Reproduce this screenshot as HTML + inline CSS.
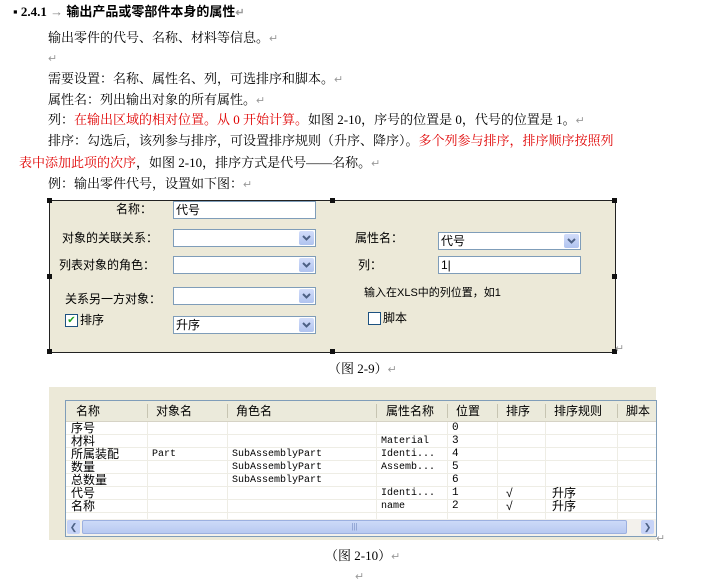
<!DOCTYPE html>
<html><head><meta charset="utf-8"><style>
body{margin:0;width:703px;height:583px;background:#fff;position:relative;overflow:hidden;font-family:"Liberation Serif","Noto Serif CJK SC","Noto Sans CJK SC",serif;font-size:13px;color:#000}
.a{position:absolute;white-space:nowrap;line-height:15px}
.r{color:#e00000}
.m{color:#999;font-size:11px}
.dlg{position:absolute;left:49px;top:200px;width:565px;height:151px;background:#ece9d8;border:1px solid #222}
.h{position:absolute;width:5px;height:5px;background:#111}
.s{font-family:"Liberation Sans","Noto Sans CJK SC",sans-serif;font-size:12px}
.tb{position:absolute;background:#fff;border:1px solid #7f9db9;height:18px;box-sizing:border-box;font-size:12px;line-height:16px;padding-left:2px}
.dd{position:absolute;right:1px;top:1px;width:15px;height:14px;background:linear-gradient(#d2ddfa,#b0c3ef);border-radius:2px}
.dd svg{position:absolute;left:3px;top:3px}
.cb{position:absolute;width:11px;height:11px;border:1px solid #1c5180;background:#fff;font-size:10px;line-height:11px;color:#21a121;text-align:center}
.tbl{position:absolute;left:49px;top:387px;width:607px;height:153px;background:#ece9d8}
.lst{position:absolute;left:16px;top:13px;width:590px;height:135px;background:#fff;border:1px solid #7f9db9;overflow:hidden}
.c{position:absolute;font-size:12px;line-height:13px;white-space:nowrap}
.mono{font-family:"Liberation Mono",monospace;font-size:10px}
</style></head><body>
<div class="a" style="left:13px;top:4px;font-weight:bold;font-family:'Liberation Serif','Noto Sans CJK SC',serif">▪ 2.4.1 <span style="color:#888;font-weight:normal">→</span> 输出产品或零部件本身的属性<span class="m">↵</span></div>
<div class="a" style="left:48px;top:30px">输出零件的代号、名称、材料等信息。<span class="m">↵</span></div>
<div class="a m" style="left:48px;top:52px">↵</div>
<div class="a" style="left:48px;top:71px">需要设置：名称、属性名、列，可选排序和脚本。<span class="m">↵</span></div>
<div class="a" style="left:48px;top:92px">属性名：列出输出对象的所有属性。<span class="m">↵</span></div>
<div class="a" style="left:48px;top:112px">列：<span class="r">在输出区域的相对位置。从 0 开始计算。</span>如图 2-10，序号的位置是 0，代号的位置是 1。<span class="m">↵</span></div>
<div class="a" style="left:48px;top:133px">排序：勾选后，该列参与排序，可设置排序规则（升序、降序）。<span class="r">多个列参与排序，排序顺序按照列</span></div>
<div class="a" style="left:19px;top:155px"><span class="r">表中添加此项的次序</span>，如图 2-10，排序方式是代号——名称。<span class="m">↵</span></div>
<div class="a" style="left:48px;top:176px">例：输出零件代号，设置如下图：<span class="m">↵</span></div>

<div class="dlg s">
<div class="h" style="left:-3px;top:-3px"></div><div class="h" style="left:280px;top:-3px"></div><div class="h" style="left:562px;top:-3px"></div>
<div class="h" style="left:-3px;top:73px"></div><div class="h" style="left:562px;top:73px"></div>
<div class="h" style="left:-3px;top:148px"></div><div class="h" style="left:280px;top:148px"></div><div class="h" style="left:562px;top:148px"></div>
<div class="a" style="left:66px;top:1px">名称：</div>
<div class="tb" style="left:123px;top:0px;width:143px">代号</div>
<div class="a" style="left:12px;top:30px">对象的关联关系：</div>
<div class="tb" style="left:123px;top:28px;width:143px"><div class="dd"><svg width="9" height="8"><path d="M1 2 L4.5 5.5 L8 2" fill="none" stroke="#4d6185" stroke-width="2"/></svg></div></div>
<div class="a" style="left:9px;top:57px">列表对象的角色：</div>
<div class="tb" style="left:123px;top:55px;width:143px"><div class="dd"><svg width="9" height="8"><path d="M1 2 L4.5 5.5 L8 2" fill="none" stroke="#4d6185" stroke-width="2"/></svg></div></div>
<div class="a" style="left:15px;top:91px">关系另一方对象：</div>
<div class="tb" style="left:123px;top:86px;width:143px"><div class="dd"><svg width="9" height="8"><path d="M1 2 L4.5 5.5 L8 2" fill="none" stroke="#4d6185" stroke-width="2"/></svg></div></div>
<div class="cb" style="left:15px;top:113px">✔</div>
<div class="a" style="left:30px;top:112px">排序</div>
<div class="tb" style="left:123px;top:115px;width:143px">升序<div class="dd"><svg width="9" height="8"><path d="M1 2 L4.5 5.5 L8 2" fill="none" stroke="#4d6185" stroke-width="2"/></svg></div></div>
<div class="a" style="left:305px;top:30px">属性名：</div>
<div class="tb" style="left:388px;top:31px;width:143px">代号<div class="dd"><svg width="9" height="8"><path d="M1 2 L4.5 5.5 L8 2" fill="none" stroke="#4d6185" stroke-width="2"/></svg></div></div>
<div class="a" style="left:308px;top:57px">列：</div>
<div class="tb" style="left:388px;top:55px;width:143px">1|</div>
<div class="a" style="left:314px;top:85px;font-size:11px">输入在XLS中的列位置，如1</div>
<div class="cb" style="left:318px;top:111px"></div>
<div class="a" style="left:333px;top:110px">脚本</div>
</div>
<div class="a m" style="left:615px;top:342px">↵</div>
<div class="a" style="left:328px;top:361px">（图 2-9）<span class="m">↵</span></div>

<div class="tbl s">
<div class="lst">
<div style="position:absolute;left:0;top:0;width:590px;height:20px;background:#ebeadb;border-bottom:2px solid #d6d3c6"></div>
<div class="c" style="left:10px;top:4px">名称</div><div class="c" style="left:90px;top:4px">对象名</div><div class="c" style="left:170px;top:4px">角色名</div><div class="c" style="left:320px;top:4px">属性名称</div><div class="c" style="left:390px;top:4px">位置</div><div class="c" style="left:440px;top:4px">排序</div><div class="c" style="left:488px;top:4px">排序规则</div><div class="c" style="left:560px;top:4px">脚本</div>
<div style="position:absolute;left:81px;top:3px;width:1px;height:14px;background:#c7c5b2"></div><div style="position:absolute;left:161px;top:3px;width:1px;height:14px;background:#c7c5b2"></div><div style="position:absolute;left:310px;top:3px;width:1px;height:14px;background:#c7c5b2"></div><div style="position:absolute;left:381px;top:3px;width:1px;height:14px;background:#c7c5b2"></div><div style="position:absolute;left:431px;top:3px;width:1px;height:14px;background:#c7c5b2"></div><div style="position:absolute;left:479px;top:3px;width:1px;height:14px;background:#c7c5b2"></div><div style="position:absolute;left:551px;top:3px;width:1px;height:14px;background:#c7c5b2"></div>
<div style="position:absolute;left:0;top:21px;width:590px;height:97px;background:repeating-linear-gradient(#fff 0 12px,#eeede5 12px 13px)"></div>
<div style="position:absolute;left:81px;top:21px;width:1px;height:97px;background:#eeede5"></div><div style="position:absolute;left:161px;top:21px;width:1px;height:97px;background:#eeede5"></div><div style="position:absolute;left:310px;top:21px;width:1px;height:97px;background:#eeede5"></div><div style="position:absolute;left:381px;top:21px;width:1px;height:97px;background:#eeede5"></div><div style="position:absolute;left:431px;top:21px;width:1px;height:97px;background:#eeede5"></div><div style="position:absolute;left:479px;top:21px;width:1px;height:97px;background:#eeede5"></div><div style="position:absolute;left:551px;top:21px;width:1px;height:97px;background:#eeede5"></div>
<div class="c" style="left:5px;top:21px">序号<br>材料<br>所属装配<br>数量<br>总数量<br>代号<br>名称</div>
<div class="c mono" style="left:86px;top:47px;line-height:13px">Part</div>
<div class="c mono" style="left:166px;top:47px;line-height:13px">SubAssemblyPart<br>SubAssemblyPart<br>SubAssemblyPart</div>
<div class="c mono" style="left:315px;top:34px;line-height:13px">Material<br>Identi...<br>Assemb...<br>&nbsp;<br>Identi...<br>name</div>
<div class="c mono" style="left:386px;top:21px;font-size:11px">0<br>3<br>4<br>5<br>6<br>1<br>2</div>
<div class="c" style="left:440px;top:86px">√<br>√</div>
<div class="c" style="left:486px;top:86px">升序<br>升序</div>
<div style="position:absolute;left:0;top:118px;width:590px;height:17px;background:#f3f1ec"></div>
<div style="position:absolute;left:1px;top:119px;width:13px;height:14px;background:#c6d3f7;border-radius:2px;font-size:9px;color:#4d6185;text-align:center;line-height:14px">❮</div>
<div style="position:absolute;left:16px;top:119px;width:545px;height:14px;background:linear-gradient(#cddaf8,#b8c9f1);border:1px solid #9cb0e0;border-radius:2px;box-sizing:border-box;text-align:center;font-size:8px;color:#7f94c8;line-height:12px">|||</div>
<div style="position:absolute;left:575px;top:119px;width:13px;height:14px;background:#c6d3f7;border-radius:2px;font-size:9px;color:#4d6185;text-align:center;line-height:14px">❯</div>
</div>
</div>
<div class="a m" style="left:656px;top:532px">↵</div>
<div class="a" style="left:325px;top:548px">（图 2-10）<span class="m">↵</span></div>
<div class="a m" style="left:355px;top:570px">↵</div>
</body></html>
